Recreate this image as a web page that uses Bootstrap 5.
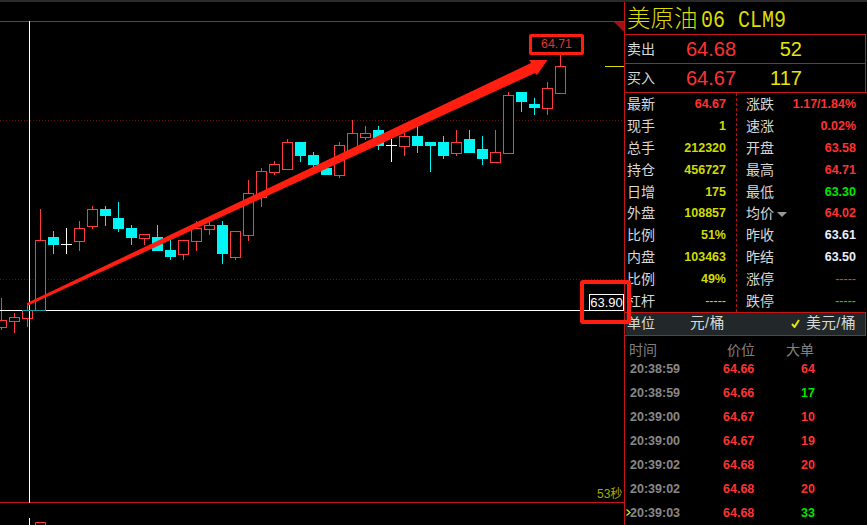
<!DOCTYPE html>
<html lang="zh-CN">

<head>
    <meta charset="UTF-8">
    <meta name="viewport" content="width=device-width, initial-scale=1.0">
    <title>美原油06 CLM9</title>
    <link rel="stylesheet" href="https://cdn.jsdelivr.net/npm/bootstrap@5.3.2/dist/css/bootstrap.min.css">
    <style>
        html, body { background: #000; height: 525px; overflow: hidden; }
        body { font-family: "Liberation Sans", "Noto Sans CJK SC", sans-serif; color: #d8d8d8; }
        .app { width: 867px; height: 525px; }
        .chart-area { width: 624px; height: 525px; flex: none; }
        .chart-area svg { display: block; }
        .side { width: 243px; flex: none; border-left: 1px solid #c81414; height: 525px; }
        .top-strip { position: absolute; left: 0; top: 0; width: 867px; height: 2px; background: #2a2a2a; }

        .hi-box { position: absolute; left: 529px; top: 34px; width: 55px; height: 21px; border: 3px solid #ff1e0f; border-radius: 2px; color: #e03232; font-size: 12.4px; line-height: 15px; text-align: center; }
        .cross-val { position: absolute; left: 589px; top: 294px; width: 35px; height: 17px; border: 1px solid #fff; background: #000; color: #fff; font-size: 13px; line-height: 16px; text-align: center; }
        .cross-box { position: absolute; left: 580px; top: 280px; width: 51px; height: 44px; border: 4px solid #ff1e0f; border-radius: 3px; z-index: 5; }
        .secs { position: absolute; left: 597px; top: 487px; color: #a8a800; font-size: 12px; line-height: 14px; }

        .title-row { height: 34px; color: #dcdc00; padding-left: 2px; white-space: nowrap; }
        .title-cn { font-size: 23.5px; line-height: 38px; font-weight: 300; margin-right: 3px; }
        .title-code { display: inline-block; font-family: "Liberation Mono", monospace; font-size: 24px; line-height: 38px; transform: scaleX(.833); transform-origin: left center; }
        .code-a { width: 37px; }

        .quote-row { height: 29px; border-top: 1px solid #c81414; border-right: 1px solid #c81414; margin-right: 1px; padding-left: 2px; position: relative; }
        .quote-row .lbl { font-size: 14px; width: 59px; }
        .quote-row .px { font-size: 20px; color: #ff3232; width: 50px; line-height: 28px; }
        .quote-row .vol { font-size: 20px; color: #e6e600; width: 66px; text-align: right; line-height: 28px; }

        .stats { height: 221px; border-top: 1px solid #c81414; }
        .stat-col-l { width: 112px; padding: 0 10px 0 2px; border-right: 1px dashed #b01414; }
        .stat-col-r { width: 130px; padding: 0 11px 0 9px; }
        .stat-line { height: 21.9px; font-size: 14px; line-height: 22px; white-space: nowrap; }
        .stat-line b { font-size: 12.5px; }
        .c-up { color: #ff3232; }
        .c-down { color: #00e600; }
        .c-vol { color: #cfdc00; }
        .c-flat { color: #e8f0ff; }
        .arrow-down { display: inline-block; width: 0; height: 0; border: 5px solid transparent; border-top-color: #999; border-bottom: 0; margin-left: 3px; vertical-align: 1px; }
        .dash { font-weight: 400; letter-spacing: 0; }

        .unit-row { height: 26px; border-top: 1px solid #c81414; border-bottom: 1px solid #c81414; border-right: 1px solid #c81414; margin-right: 1px; background: #22282a; font-size: 14px; padding: 0 9px 0 2px; box-shadow: inset 1px 0 #000; }
        .unit-a { position: absolute; left: 65px; font-size: 14.6px; letter-spacing: .5px; }
        .unit-b { font-size: 14.6px; letter-spacing: .5px; }
        .unit-row svg { margin-right: 6px; }

        .trade-head { height: 23px; margin-top: 1px; color: #808080; font-size: 14px; line-height: 26px; position: relative; }
        .trade-head span { position: absolute; top: 0; }
        .trade-line { height: 24px; line-height: 24px; font-size: 12.5px; font-weight: 700; position: relative; }
        .t-time { position: absolute; left: 5px; color: #888; }
        .t-price { position: absolute; left: 98px; color: #ff3232; }
        .t-size { position: absolute; right: 52px; }
        .t-cursor { position: absolute; left: 1px; top: 8px; display: block; }
    </style>
</head>

<body>
    <div class="app d-flex position-relative">
        <div class="chart-area position-relative">
            <svg id="chart" width="624" height="525" viewBox="0 0 624 525"></svg>
            <div class="hi-box">64.71</div>
            <div class="cross-val">63.90</div>
            <div class="cross-box"></div>
            <div class="secs">53秒</div>
        </div>

        <div class="side d-flex flex-column">
            <div class="title-row">
                <span class="title-cn">美原油</span><span class="title-code code-a">06</span><span class="title-code">CLM9</span>
            </div>
            <div class="quote-row d-flex align-items-center">
                <span class="lbl">卖出</span><span class="px">64.68</span><span class="vol">52</span>
            </div>
            <div class="quote-row d-flex align-items-center">
                <span class="lbl">买入</span><span class="px">64.67</span><span class="vol">117</span>
            </div>

            <div class="stats d-flex">
                <div class="stat-col-l" id="stats-l"></div>
                <div class="stat-col-r" id="stats-r"></div>
            </div>

            <div class="unit-row d-flex align-items-center justify-content-between position-relative">
                <span>单位</span>
                <span class="unit-a">元/桶</span>
                <span class="unit-b d-flex align-items-center">
                    <svg width="9" height="9" viewBox="0 0 9 9"><path d="M1 5l2.5 3L8 1" fill="none" stroke="#e6e600" stroke-width="2"/></svg>美元/桶
                </span>
            </div>

            <div class="trade-head">
                <span style="left:4px">时间</span><span style="left:102px">价位</span><span style="left:161px">大单</span>
            </div>
            <div id="trades"></div>
        </div>
        <div class="top-strip"></div>
    </div>

    <script src="https://cdn.jsdelivr.net/npm/bootstrap@5.3.2/dist/js/bootstrap.bundle.min.js"></script>
    <script>
        // [x index, wick top, wick bottom, body top, body bottom, type]  r = hollow red, c = cyan, w = white doji
        const candles = [
            [0, 298, 330, 320, 327, "r"], [1, 313, 333, 317, 321, "r"], [2, 305, 327, 310, 318, "r"], [3, 209, 310, 240, 310, "r"],
            [4, 231, 254, 237, 245, "c"], [5, 228, 254, 244, 244, "w"], [6, 221, 251, 228, 241, "r"], [7, 206, 229, 209, 226, "r"],
            [8, 206, 226, 209, 216, "c"], [9, 202, 232, 218, 229, "c"], [10, 225, 245, 228, 238, "c"], [11, 234, 245, 234, 238, "r"],
            [12, 225, 251, 237, 251, "c"], [13, 240, 260, 250, 257, "c"], [14, 240, 260, 240, 254, "r"], [15, 221, 251, 228, 241, "r"],
            [16, 221, 235, 225, 229, "r"], [17, 221, 264, 225, 254, "c"], [18, 231, 260, 231, 257, "r"], [19, 180, 241, 193, 235, "r"],
            [20, 168, 207, 171, 197, "r"], [21, 161, 175, 164, 172, "r"], [22, 139, 169, 142, 169, "r"], [23, 142, 162, 142, 156, "c"],
            [24, 152, 167, 155, 165, "c"], [25, 165, 175, 168, 175, "c"], [26, 142, 178, 145, 175, "r"], [27, 120, 152, 133, 152, "r"],
            [28, 126, 140, 133, 137, "r"], [29, 126, 150, 130, 146, "c"], [30, 139, 162, 145, 145, "w"], [31, 133, 156, 136, 146, "r"],
            [32, 125, 153, 136, 146, "c"], [33, 142, 172, 142, 146, "c"], [34, 136, 159, 142, 156, "c"], [35, 130, 156, 142, 153, "r"],
            [36, 130, 153, 139, 153, "c"], [37, 136, 165, 149, 159, "c"], [38, 130, 162, 152, 162, "r"], [39, 92, 153, 95, 153, "r"],
            [40, 92, 112, 92, 102, "c"], [41, 98, 115, 104, 108, "c"], [42, 82, 115, 88, 108, "r"], [43, 55, 93, 66, 93, "r"]
        ];

        const RED = "#ff3c3c", CYAN = "#00f5f5";
        const chart = document.getElementById("chart");

        function add(tag, attrs) {
            let el = document.createElementNS("http://www.w3.org/2000/svg", tag);
            for (let k in attrs) el.setAttribute(k, attrs[k]);
            chart.appendChild(el);
        }
        function hline(x1, x2, y, color, extra) {
            add("line", Object.assign({ x1, x2, y1: y + .5, y2: y + .5, stroke: color }, extra || {}));
        }
        function vline(x, y1, y2, color) {
            add("line", { x1: x + .5, x2: x + .5, y1, y2, stroke: color });
        }

        hline(0, 624, 21, "#c81414");
        hline(0, 624, 502, "#c81414");
        hline(0, 624, 120, "#661010", { "stroke-dasharray": "1 2" });
        hline(0, 624, 279, "#661010", { "stroke-dasharray": "1 2" });
        hline(605, 624, 66, "#dcdc00");
        add("polygon", { points: "614,22 624,22 624,32", fill: "#a01212" });

        candles.forEach(c => {
            let x = 1 + 13 * c[0];
            let color = c[5] == "r" ? RED : c[5] == "c" ? CYAN : "#fff";
            vline(x, c[1], c[2], color);
            if (c[5] == "w") hline(x - 5, x + 6, c[3], color);
            else if (c[5] == "c") add("rect", { x: x - 5, y: c[3], width: 11, height: c[4] - c[3], fill: color });
            else add("rect", { x: x - 4.5, y: c[3] + .5, width: 10, height: c[4] - c[3], fill: "#000", stroke: color });
        });

        // crosshair
        vline(29, 21, 503, "#fff");
        vline(29, 518, 525, "#fff");
        hline(0, 589, 310, "#fff");
        hline(22, 46, 310, "#1aa0a0");
        add("path", { d: "M35.5 525V522.5H45.5V525", fill: "none", stroke: RED });

        // hand-drawn arrow
        add("polygon", { points: "27,303 531,63 529,60 547.5,60 537,75 535,73 27,306", fill: "#ff1e0f" });

        const statsL = [
            ["最新", "64.67", "c-up"], ["现手", "1", "c-vol"], ["总手", "212320", "c-vol"], ["持仓", "456727", "c-vol"], ["日增", "175", "c-vol"],
            ["外盘", "108857", "c-vol"], ["比例", "51%", "c-vol"], ["内盘", "103463", "c-vol"], ["比例", "49%", "c-vol"], ["杠杆", "-----", "c-vol dash"]
        ];
        const statsR = [
            ["涨跌", "1.17/1.84%", "c-up"], ["速涨", "0.02%", "c-up"], ["开盘", "63.58", "c-up"], ["最高", "64.71", "c-up"], ["最低", "63.30", "c-down"],
            ["均价", "64.02", "c-up", true], ["昨收", "63.61", "c-flat"], ["昨结", "63.50", "c-flat"], ["涨停", "-----", "c-up dash"], ["跌停", "-----", "c-down dash"]
        ];
        function fillStats(id, rows) {
            document.getElementById(id).innerHTML = rows.map(r =>
                `<div class="stat-line d-flex justify-content-between"><span>${r[0]}${r[3] ? '<i class="arrow-down"></i>' : ""}</span><b class="${r[2]}">${r[1]}</b></div>`
            ).join("");
        }
        fillStats("stats-l", statsL);
        fillStats("stats-r", statsR);

        const trades = [
            ["20:38:59", "64.66", "64", "c-up"], ["20:38:59", "64.66", "17", "c-down"], ["20:39:00", "64.67", "10", "c-up"], ["20:39:00", "64.67", "19", "c-up"],
            ["20:39:02", "64.68", "20", "c-up"], ["20:39:02", "64.68", "20", "c-up"], ["20:39:03", "64.68", "33", "c-down"]
        ];
        const cursor = '<svg class="t-cursor" width="5" height="7" viewBox="0 0 5 7"><path d="M.5 .5L4 3.5L.5 6.5" fill="none" stroke="#e6e600" stroke-width="1.3"/></svg>';
        document.getElementById("trades").innerHTML = trades.map((t, i) =>
            `<div class="trade-line">${i == 6 ? cursor : ""}<span class="t-time">${t[0]}</span><span class="t-price">${t[1]}</span><span class="t-size ${t[3]}">${t[2]}</span></div>`
        ).join("");
    </script>
</body>

</html>
